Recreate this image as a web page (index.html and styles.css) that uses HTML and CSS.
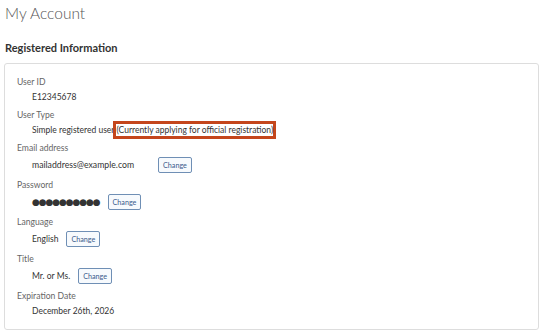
FILE: index.html
```html
<!DOCTYPE html>
<html>
<head>
    <title>My Account</title>
    <link rel="stylesheet" href="styles.css">
</head>
<body>
    <h1 class="page-title">My Account</h1>
    <h2 class="section-title">Registered Information</h2>

    <div class="card">
        <div class="row">
            <div class="label">User ID</div>
            <div class="value">E12345678</div>
        </div>
        <div class="row">
            <div class="label">User Type</div>
            <div class="value">Simple registered user<span class="highlight">(Currently applying for official registration)</span></div>
        </div>
        <div class="row">
            <div class="label">Email address</div>
            <div class="value has-button"><span class="email">mailaddress@example.com</span><button class="change-button">Change</button></div>
        </div>
        <div class="row">
            <div class="label">Password</div>
            <div class="value has-button"><span class="dots">●●●●●●●●●●</span><button class="change-button">Change</button></div>
        </div>
        <div class="row">
            <div class="label">Language</div>
            <div class="value has-button">English<button class="change-button">Change</button></div>
        </div>
        <div class="row">
            <div class="label">Title</div>
            <div class="value has-button">Mr. or Ms.<button class="change-button">Change</button></div>
        </div>
        <div class="row">
            <div class="label">Expiration Date</div>
            <div class="value">December 26th, 2026</div>
        </div>
    </div>
</body>
</html>
```

FILE: styles.css
```css
body {
    font-family: Lato, "Open Sans", sans-serif;
    margin: 0;
    padding: 0 9px 0 4px;
    background-color: white;
    color: #222;
}
.page-title {
    margin: 0;
    padding: 3px 0 0 1px;
    font-size: 15.5px;
    font-weight: 300;
    line-height: 20px;
    color: #555;
}
.section-title {
    margin: 18px 0 8px 1px;
    font-size: 11px;
    font-weight: 700;
    line-height: 14px;
    color: #333;
}
.card {
    border: 1px solid #ddd;
    border-radius: 3px;
    padding: 12px 12px 6px;
}
.row {
    margin-bottom: 5px;
}
.label {
    font-size: 8.6px;
    line-height: 13px;
    color: #666;
    margin-bottom: 1px;
}
.value {
    padding-left: 15px;
    font-size: 8.5px;
    line-height: 14px;
    color: #333;
}
.value.has-button {
    display: flex;
    align-items: center;
    min-height: 18px;
}
.email {
    margin-right: 16px;
    font-size: 8.7px;
}
.dots {
    font-family: "DejaVu Sans", sans-serif;
    font-size: 9px;
    letter-spacing: -1.1px;
}
.highlight {
    margin-left: -1px;
    padding: 1px 0;
    border: 3px solid #c4461c;
}
.change-button {
    margin-left: 8px;
    height: 16px;
    padding: 0 4px;
    font-family: Lato, sans-serif;
    font-size: 7.2px;
    color: #3a5a8c;
    background-color: #f7fafd;
    border: 1px solid #6f8fb5;
    border-radius: 2px;
    cursor: pointer;
}
```
